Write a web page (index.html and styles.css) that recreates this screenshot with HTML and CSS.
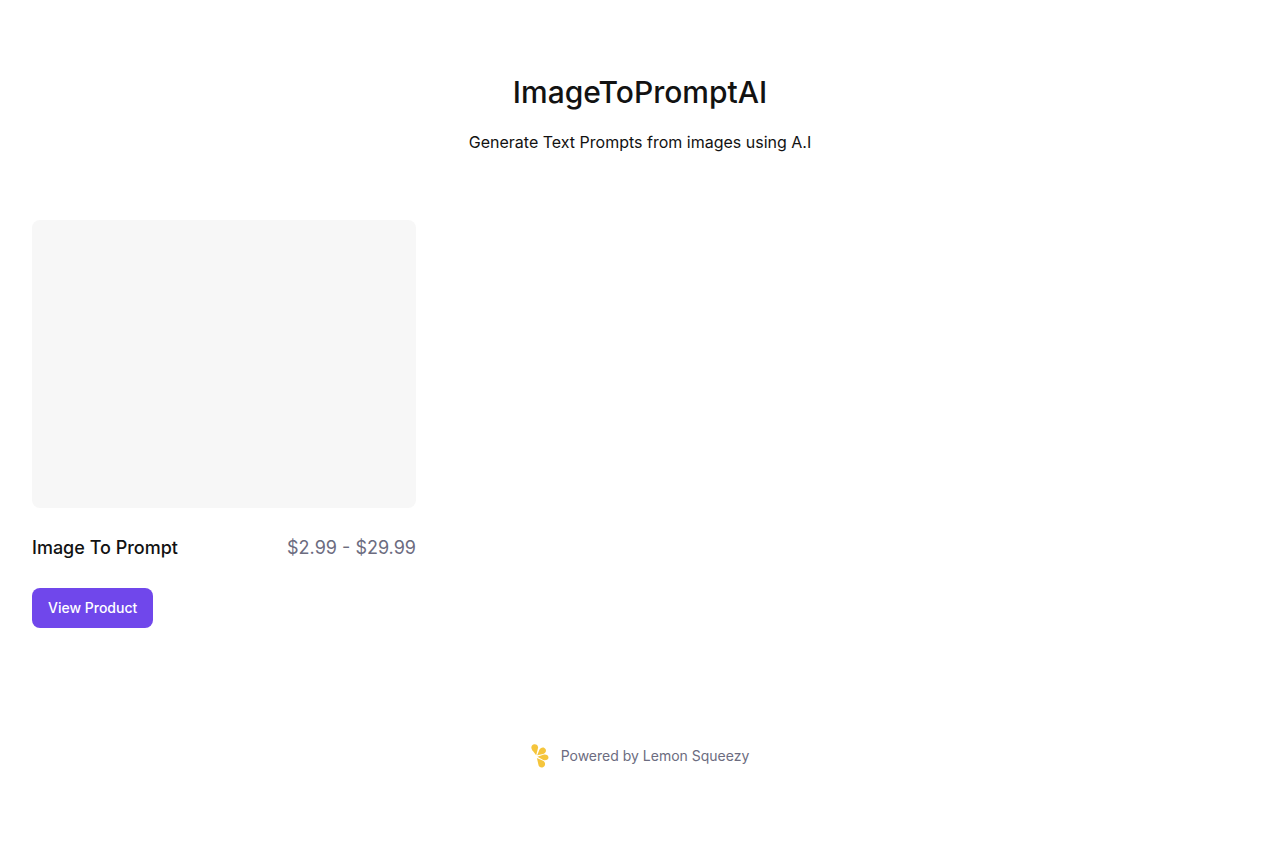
FILE: index.html
```html
<!DOCTYPE html>
<html lang="en">
<head>
    <meta charset="UTF-8">
    <meta name="viewport" content="width=device-width, initial-scale=1.0">
    <title>ImageToPromptAI</title>
    <link rel="stylesheet" href="styles.css">
</head>
<body>
    <header class="store-header">
        <h1 class="store-title">ImageToPromptAI</h1>
        <p class="store-description">Generate Text Prompts from images using A.I</p>
    </header>

    <main class="products">
        <article class="product">
            <div class="product-media"></div>
            <div class="product-info">
                <h2 class="product-name">Image To Prompt</h2>
                <span class="product-price">$2.99 - $29.99</span>
            </div>
            <a href="#" class="button">View Product</a>
        </article>
    </main>

    <footer class="store-footer">
        <a href="#" class="powered-by">
            <svg class="powered-logo" xmlns="http://www.w3.org/2000/svg" width="18" height="24" viewBox="0 0 18 24" fill="#F5C53C" aria-hidden="true">
                <path d="M5.200 11.200 1.300 6.200C-.2 4.200.1 1.500 2.300.6c2.300-.9 4.700.5 4.800 2.900z"/>
                <path d="M6.200 11.200 8.300 6c.9-2.100 3.300-3.100 5.100-2 1.900 1.100 2.200 3.500.5 5.000-.5.5-1.100.8-1.700 1z"/>
                <path d="M6.500 12.800 12.200 10.800c2.500-.9 5.300.4 5.300 2.600s-2.800 3.300-5.200 2.500z"/>
                <path d="M5.900 13.900 12 16.800c2.200 1.100 2.700 3.700 1.300 5.400-1.600 1.900-4.700 1.700-5.700-.6z"/>
            </svg>
            <span>Powered by Lemon Squeezy</span>
        </a>
    </footer>
</body>
</html>
```

FILE: styles.css
```css
body {
    font-family: Inter, "Liberation Sans", sans-serif;
    font-size: 16px;
    line-height: 24px;
    background-color: #FFFFFF;
    color: #121212;
    margin: 0;
}
.store-header {
    padding: 72px 32px 66px;
    text-align: center;
}
.store-title {
    font-size: 30px;
    line-height: 40px;
    font-weight: 500;
    margin: 0 0 18px;
}
.store-description {
    margin: 0;
}
.products {
    display: grid;
    grid-template-columns: repeat(3, 1fr);
    gap: 32px;
    padding: 0 32px;
}
.product-media {
    aspect-ratio: 4 / 3;
    background-color: #F7F7F7;
    border-radius: 8px;
}
.product-info {
    display: flex;
    justify-content: space-between;
    gap: 16px;
    margin: 24px 0;
    font-size: 18px;
    line-height: 32px;
}
.product-name {
    font-size: 18px;
    font-weight: 500;
    margin: 0;
}
.product-price {
    color: #6C6C80;
}
.button {
    display: inline-block;
    background-color: #7047EB;
    color: #FFFFFF;
    font-size: 14px;
    line-height: 24px;
    font-weight: 500;
    padding: 8px 16px;
    border-radius: 8px;
    text-decoration: none;
}
.button:hover {
    background-color: #5423E7;
}
.store-footer {
    display: flex;
    justify-content: center;
    padding: 116px 32px 80px;
}
.powered-by {
    display: flex;
    align-items: center;
    gap: 12px;
    color: #6C6C80;
    font-size: 14px;
    text-decoration: none;
}
@media (max-width: 768px) {
    .products {
        grid-template-columns: 1fr;
    }
}
```
